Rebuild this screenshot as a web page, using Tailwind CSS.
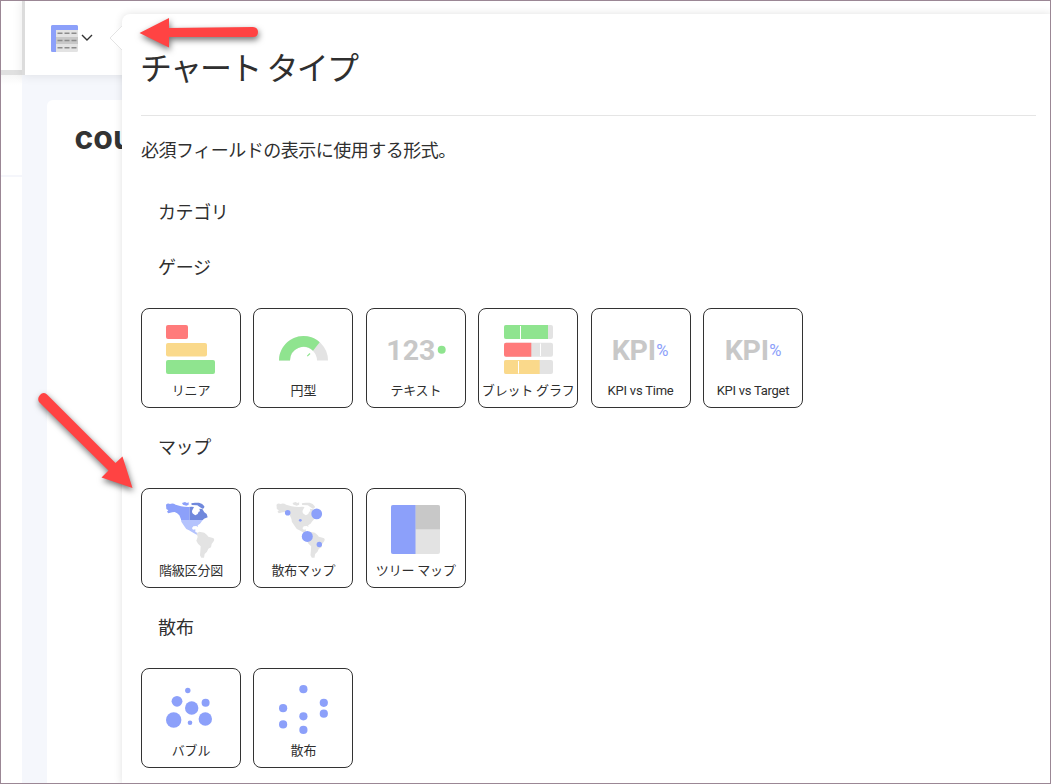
<!DOCTYPE html>
<html lang="ja">
<head>
<meta charset="utf-8">
<title>チャート タイプ</title>
<script src="https://cdn.jsdelivr.net/npm/@tailwindcss/browser@4"></script>
</head>
<body class="relative h-[784px] w-[1051px] overflow-hidden bg-white font-['Roboto','Noto_Sans_CJK_JP',sans-serif] text-[#2f2f2f]">

<!-- Editor behind the popover -->
<div class="flex h-full w-full">
  <div class="flex w-[22px] shrink-0 flex-col">
    <div class="h-[70px] bg-white"></div>
    <div class="h-[5px] bg-[#e0e0e0]"></div>
    <div class="h-[102px] border-b-2 border-[#f5f6fb] bg-linear-to-b from-[#f7f7f7] to-white to-10%"></div>
  </div>
  <div class="flex grow flex-col bg-[#f5f7fc]">
    <div class="z-10 flex h-[75px] shrink-0 items-center border-l-[3px] border-[#dcdcdc] bg-white pt-[2px] pl-[26px] shadow-[0_1px_10px_rgba(0,0,0,0.09)]">
      <svg class="h-[27px] w-[27px]" viewBox="0 0 27 27">
        <rect width="27" height="27" rx="1.5" fill="#e3e3e3"/>
        <rect x="5" y="12" width="22" height="7" fill="#c8c8c8"/>
        <path d="M1.500 0H25.500Q27 0 27 1.500V5H5V27H1.500Q0 27 0 25.500V1.500Q0 0 1.500 0Z" fill="#8ca0fa"/>
        <path d="M6.500 8.300H25.500M6.500 15.500H25.500M6.500 22.800H25.500" stroke="#8c8c8c" stroke-width="1.600" stroke-dasharray="5 2"/>
      </svg>
      <svg class="-mt-[2px] ml-[3px] h-3 w-3" viewBox="0 0 12 12"><path d="M1 3L6 8L11 3" fill="none" stroke="#333" stroke-width="1.400"/></svg>
    </div>
    <div class="ml-[25px] mt-[25px] grow rounded-tl-md bg-white pl-[27.500px] pt-[18px]">
      <div class="font-['Inter',sans-serif] text-[32px] leading-[40px] font-bold text-[#333]">cou</div>
    </div>
  </div>
</div>

<!-- Popover -->
<section class="absolute top-[14px] right-0 bottom-0 left-[122px] z-20 rounded-tl-lg bg-white pl-[19px] pr-[15px] shadow-[0_0_8px_rgba(0,0,0,0.12)]">
  <svg class="absolute top-3 -left-[13px] h-6 w-[14px]" viewBox="0 0 14 24"><path d="M14 -1L1 12L14 25" fill="#fff" stroke="#e4e4e4"/></svg>

  <h1 class="h-[102px] border-b border-[#e5e5e5] pt-[33px] text-[32px] leading-[44px] tracking-[-1.800px]"><span class="-ml-px">チャート</span> タイプ</h1>
  <p class="mt-[22px] text-[18px] leading-[26px] tracking-[-0.500px]">必須フィールドの表示に使用する形式。</p>
  <h2 class="mt-9 pl-[17px] text-[18px] leading-[26px] tracking-[-0.400px]">カテゴリ</h2>

  <h2 class="mt-[29px] pl-[17px] text-[18px] leading-[26px] tracking-[-0.300px]">ゲージ</h2>
  <div class="mt-[27px] flex gap-[12.400px] text-[13px] leading-[22px] tracking-[-0.200px]">
    <div class="flex h-[100px] w-[100px] flex-col items-center rounded-lg border border-[#333] whitespace-nowrap">
      <svg class="h-[71px] w-[98px] shrink-0" viewBox="1 1 98 71">
        <rect x="25" y="17" width="22" height="14" rx="2" fill="#ff7b7b"/>
        <rect x="25" y="35" width="41" height="13.500" rx="2" fill="#fad98b"/>
        <rect x="25" y="52" width="49" height="14" rx="2" fill="#8fe48f"/>
      </svg>
      <span>リニア</span>
    </div>
    <div class="flex h-[100px] w-[100px] flex-col items-center rounded-lg border border-[#333] whitespace-nowrap">
      <svg class="h-[71px] w-[98px] shrink-0" viewBox="1 1 98 71">
        <path d="M26 52.500A24.500 24.500 0 0 1 75 52.500H64A13.500 13.500 0 0 0 37 52.500Z" fill="#e3e3e3"/>
        <path d="M26 52.500A24.500 24.500 0 0 1 66.700 34.200L60 42.800A13.500 13.500 0 0 0 37 52.500Z" fill="#8fe48f"/>
        <path d="M54.300 48.200L57 45.500" stroke="#8fe48f" stroke-width="1.200"/>
      </svg>
      <span>円型</span>
    </div>
    <div class="flex h-[100px] w-[100px] flex-col items-center rounded-lg border border-[#333] whitespace-nowrap">
      <svg class="h-[71px] w-[98px] shrink-0" viewBox="1 1 98 71">
        <text x="20.300" y="51.500" font-size="28.500" font-weight="700" letter-spacing="0" fill="#c8c8c8">123</text>
        <circle cx="75.700" cy="41.700" r="4" fill="#8fe48f"/>
      </svg>
      <span>テキスト</span>
    </div>
    <div class="flex h-[100px] w-[100px] flex-col items-center rounded-lg border border-[#333] whitespace-nowrap">
      <svg class="h-[71px] w-[98px] shrink-0" viewBox="1 1 98 71">
        <g fill="#e3e3e3"><rect x="26" y="17" width="49" height="14" rx="2"/><rect x="26" y="34.700" width="49" height="14" rx="2"/><rect x="26" y="52" width="49" height="14" rx="2"/></g>
        <path d="M28 17H70V31H28Q26 31 26 29V19Q26 17 28 17Z" fill="#8fe48f"/>
        <path d="M28 34.700H53.300V48.700H28Q26 48.700 26 46.700V36.700Q26 34.700 28 34.700Z" fill="#ff7b7b"/>
        <path d="M28 52H61.700V66H28Q26 66 26 64V54Q26 52 28 52Z" fill="#fad98b"/>
        <path d="M42.500 18V31M62.500 35.500V48M40.500 53V65.500" stroke="#fff"/>
      </svg>
      <span>ブレット グラフ</span>
    </div>
    <div class="flex h-[100px] w-[100px] flex-col items-center rounded-lg border border-[#333] whitespace-nowrap">
      <svg class="h-[71px] w-[98px] shrink-0" viewBox="1 1 98 71">
        <text x="20.700" y="51.700" font-size="28.500" font-weight="700" letter-spacing="-0.2" fill="#c8c8c8">KPI</text>
        <text x="65.300" y="48.300" font-size="16" fill="#8ca0fa" textLength="12" lengthAdjust="spacingAndGlyphs">%</text>
      </svg>
      <span class="tracking-[-0.220px]">KPI vs Time</span>
    </div>
    <div class="flex h-[100px] w-[100px] flex-col items-center rounded-lg border border-[#333] whitespace-nowrap">
      <svg class="h-[71px] w-[98px] shrink-0" viewBox="1 1 98 71">
        <text x="21.700" y="51.700" font-size="28.500" font-weight="700" letter-spacing="-0.2" fill="#c8c8c8">KPI</text>
        <text x="66.200" y="48.300" font-size="16" fill="#8ca0fa" textLength="12" lengthAdjust="spacingAndGlyphs">%</text>
      </svg>
      <span class="tracking-[-0.260px]">KPI vs Target</span>
    </div>
  </div>

  <h2 class="mt-[27px] pl-[17px] text-[18px] leading-[26px] tracking-[-0.400px]">マップ</h2>
  <div class="mt-[27px] flex gap-[12.400px] text-[13px] leading-[22px] tracking-[-0.200px]">
    <div class="flex h-[100px] w-[100px] flex-col items-center rounded-lg border border-[#333] whitespace-nowrap">
      <svg class="h-[71px] w-[98px] shrink-0" viewBox="1 1 98 71">
        <defs>
          <path id="north" d="M33 29Q38 24 45 27Q54 24 62 29L78 34L88 35L100 36L110 35L117 36L114 42Q108 50 114 56L121 61L128 57L131 50L135 49L133 41L142 42L148 52L155 57L158 67L147 71L141 78L135 86L128 91L129 96L124 93L115 94L111 99Q112 107 121 103L121 111L128 114L125 119Q113 113 102 106Q91 102 88 94L79 80L78 73L73 61Q67 53 59 51L52 52L40 55L36 50L40 46L34 42Z"/>
          <path id="isles" d="M81 24L90 21L96 24L101 22V29L94 32L84 29ZM109 25L120 23L132 23Q143 25 148 34Q149 41 142 41L133 35L127 31L110 30Z"/>
          <path id="south" d="M125 115L133 110L148 113L156 120L160 125L174 129Q180 132 176 139L170 147L168 157L160 161L156 170L149 177L147 188H139L135 181L136 169L137 154L129 146L124 137L128 126Z"/>
          <clipPath id="nw"><rect width="104" height="75"/></clipPath>
          <clipPath id="ne"><rect x="104" width="106" height="75"/></clipPath>
          <clipPath id="sn"><rect y="75" width="210" height="60"/></clipPath>
        </defs>
        <g transform="translate(14 7) scale(.3333)">
          <g clip-path="url(#nw)" fill="#8ca0fa"><use href="#north"/><use href="#isles"/></g>
          <g clip-path="url(#ne)" fill="#7088dc"><use href="#north"/><use href="#isles"/></g>
          <g clip-path="url(#sn)" fill="#b4c3fd"><use href="#north"/></g>
          <use href="#south" fill="#e3e3e3"/>
        </g>
      </svg>
      <span>階級区分図</span>
    </div>
    <div class="flex h-[100px] w-[100px] flex-col items-center rounded-lg border border-[#333] whitespace-nowrap">
      <svg class="h-[71px] w-[98px] shrink-0" viewBox="1 1 98 71">
        <g transform="translate(12.500 7) scale(.3333)" fill="#e3e3e3"><use href="#north"/><use href="#isles"/><use href="#south"/></g>
        <g fill="#8ca0fa">
          <circle cx="34.700" cy="24.700" r="2.800"/><circle cx="63.700" cy="25.900" r="5.400"/><circle cx="47.300" cy="32.300" r="1.400"/><circle cx="54.300" cy="48.400" r="5.500"/><circle cx="66.300" cy="56.500" r="2.700"/>
        </g>
      </svg>
      <span>散布マップ</span>
    </div>
    <div class="flex h-[100px] w-[100px] flex-col items-center rounded-lg border border-[#333] whitespace-nowrap">
      <svg class="h-[71px] w-[98px] shrink-0" viewBox="1 1 98 71">
        <rect x="25" y="17" width="49" height="49" rx="2" fill="#e3e3e3"/>
        <path d="M49.500 17H72Q74 17 74 19V41.300H49.500Z" fill="#c8c8c8"/>
        <path d="M27 17H49.500V66H27Q25 66 25 64V19Q25 17 27 17Z" fill="#8ca0fa"/>
      </svg>
      <span>ツリー マップ</span>
    </div>
  </div>

  <h2 class="mt-[27px] pl-[17px] text-[18px] leading-[26px] tracking-[-0.100px]">散布</h2>
  <div class="mt-[27px] flex gap-[12.400px] text-[13px] leading-[22px] tracking-[-0.200px]">
    <div class="flex h-[100px] w-[100px] flex-col items-center rounded-lg border border-[#333] whitespace-nowrap">
      <svg class="h-[71px] w-[98px] shrink-0" viewBox="1 1 98 71" fill="#8ca0fa">
        <circle cx="32.700" cy="52" r="7.700"/><circle cx="36" cy="33.300" r="5.400"/><circle cx="46.800" cy="22.500" r="2.700"/><circle cx="50.700" cy="40" r="6.700"/><circle cx="64.600" cy="34.800" r="4"/><circle cx="64.300" cy="51" r="6.700"/><circle cx="49" cy="54.700" r="2.300"/>
      </svg>
      <span>バブル</span>
    </div>
    <div class="flex h-[100px] w-[100px] flex-col items-center rounded-lg border border-[#333] whitespace-nowrap">
      <svg class="h-[71px] w-[98px] shrink-0" viewBox="1 1 98 71" fill="#8ca0fa">
        <circle cx="50.400" cy="21.200" r="4.100"/><circle cx="70.800" cy="34.800" r="4.100"/><circle cx="70.800" cy="45.700" r="4.100"/><circle cx="30.100" cy="40.200" r="4.100"/><circle cx="50.400" cy="48.300" r="4.100"/><circle cx="30.100" cy="56.400" r="4.100"/><circle cx="50.400" cy="61.900" r="4.100"/>
      </svg>
      <span>散布</span>
    </div>
  </div>
</section>

<!-- Annotation arrows and window frame -->
<svg class="pointer-events-none absolute inset-0 z-30 h-[784px] w-[1051px] drop-shadow-[1px_3px_3px_rgba(0,0,0,0.55)]" viewBox="0 0 1051 784" fill="#ff4343">
  <path d="M139.500 33L169 18V28L253 27Q258 27.500 258 32Q258 37 253 37H169V47.500Z"/>
  <path d="M132.500 488L101.500 477.500L108.500 470.500L39 402Q37 398 40 395Q43 391.500 47 394.500L115.500 463L122.500 456.500Z"/>
</svg>
<div class="pointer-events-none absolute inset-0 z-40 border border-[#9b8795]"></div>
</body>
</html>
